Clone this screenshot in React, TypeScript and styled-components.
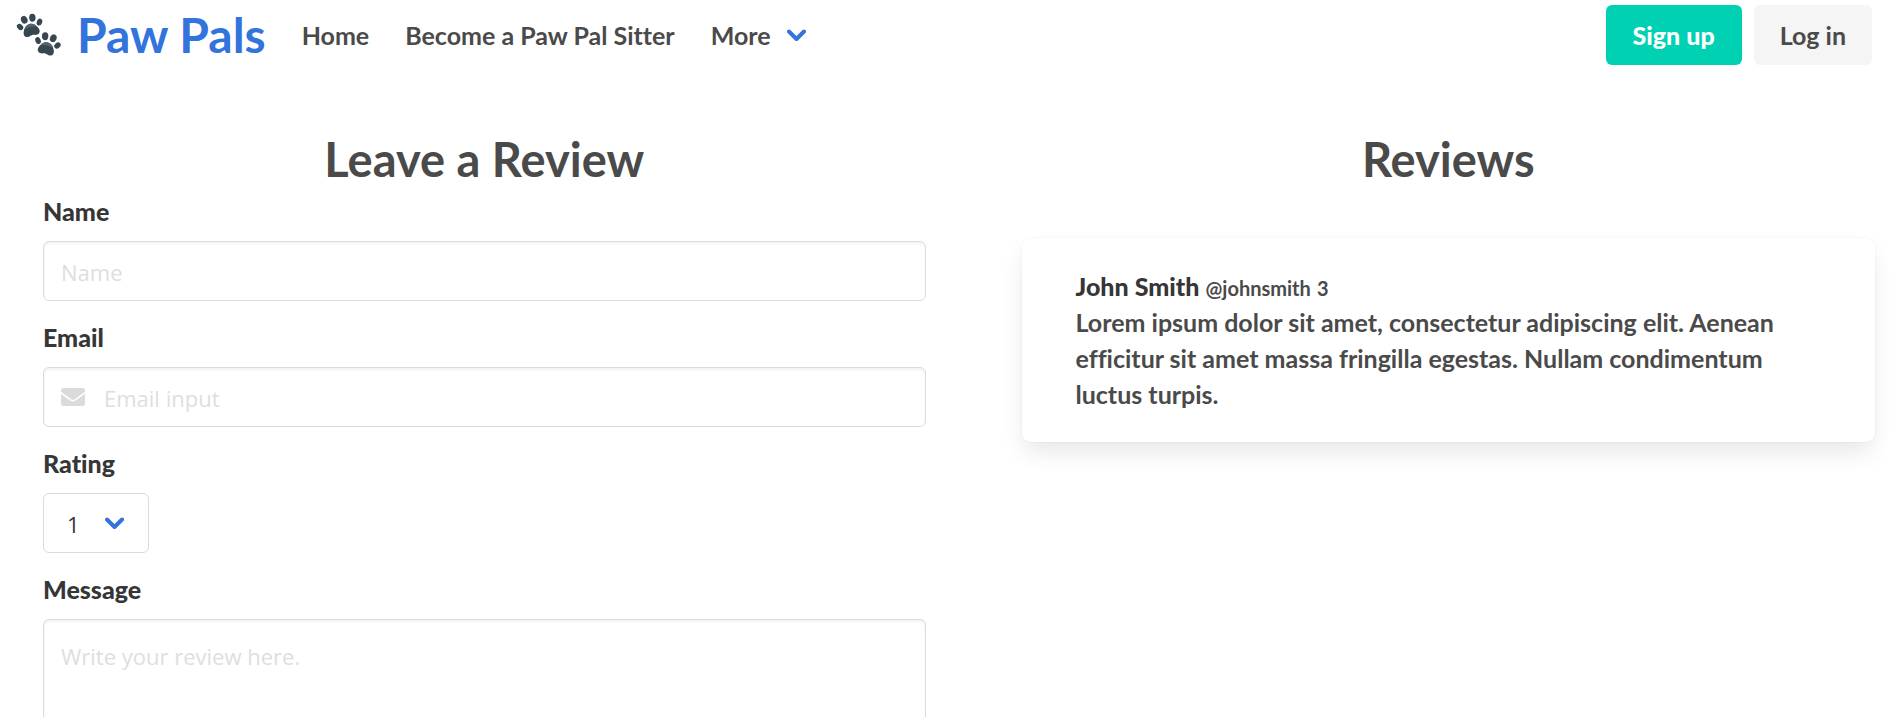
import React from "react";
import styled, { createGlobalStyle } from "styled-components";
import { FaEnvelope } from "react-icons/fa";

const GlobalStyle = createGlobalStyle`
  *, *::before, *::after { box-sizing: border-box; }
  html { overflow: hidden auto; scrollbar-width: none; }
  body {
    margin: 0;
    background: #fff;
    color: #4a4a4a;
    font-family: Lato, "Open Sans", sans-serif;
    font-size: 25px;
    font-weight: 700;
    font-variant-ligatures: none;
    line-height: 36px;
  }
  h2, p { margin: 0; }
  button, input, select, textarea { font: inherit; margin: 0; }
`;

const Navbar = styled.nav`
  display: flex;
  align-items: center;
  justify-content: space-between;
  height: 70px;
  padding: 0 17px 0 16px;
`;

const NavGroup = styled.div`
  display: flex;
  align-items: center;
  gap: 36px;
`;

const Brand = styled.a`
  display: flex;
  align-items: center;
  gap: 15px;
  color: #3273dc;
  font-size: 48px;
  line-height: 54px;
  text-decoration: none;
`;

const NavLink = styled.a`
  display: flex;
  align-items: center;
  gap: 16px;
  color: #4a4a4a;
  text-decoration: none;
`;

const Buttons = styled.div`
  display: flex;
  gap: 12px;
`;

const Button = styled.button<{ $primary?: boolean }>`
  height: 60px;
  padding: 0 ${(p) => (p.$primary ? "27px" : "26px")};
  border: 0;
  border-radius: 6px;
  background: ${(p) => (p.$primary ? "#00d1b2" : "#f5f5f5")};
  color: ${(p) => (p.$primary ? "#fff" : "#4a4a4a")};
  font-weight: ${(p) => (p.$primary ? 900 : 700)};
  cursor: pointer;
`;

const Columns = styled.main`
  display: grid;
  grid-template-columns: 1fr 1fr;
  padding-top: 62px;
`;

const FormColumn = styled.section`
  padding: 0 19px 36px 43px;
`;

const ReviewsColumn = styled.section`
  padding: 0 14px 36px 77px;
`;

const Title = styled.h2`
  font-size: 47px;
  font-weight: 700;
  line-height: 54px;
  text-align: center;
`;

const Form = styled.form`
  display: flex;
  flex-direction: column;
  gap: 18px;
  padding-top: 7px;
`;

const Field = styled.div`
  display: flex;
  flex-direction: column;
  align-items: flex-start;
  gap: 12px;
`;

const Label = styled.label`
  color: #363636;
  font-weight: 900;
`;

const Control = styled.div<{ $fit?: boolean }>`
  position: relative;
  display: flex;
  width: ${(p) => (p.$fit ? "auto" : "100%")};
`;

const TextInput = styled.input<{ $icon?: boolean }>`
  width: 100%;
  height: 60px;
  padding: 1px 17px 0 ${(p) => (p.$icon ? "60px" : "17px")};
  border: 1px solid #dbdbdb;
  border-radius: 6px;
  box-shadow: inset 0 2px 3px rgba(10, 10, 10, 0.05);
  background: #fff;
  color: #363636;
  font-family: "Open Sans", sans-serif;
  font-size: 22px;
  font-weight: 400;
  outline: none;
  &::placeholder { color: #dedede; opacity: 1; }
`;

const TextArea = styled(TextInput).attrs({ as: "textarea" })`
  display: block;
  height: auto;
  min-height: 192px;
  padding-top: 18px;
  resize: vertical;
`;

const InputIcon = styled.span`
  position: absolute;
  top: 0;
  left: 18px;
  display: flex;
  align-items: center;
  height: 60px;
  color: #dbdbdb;
  pointer-events: none;
`;

const Select = styled.select`
  appearance: none;
  width: 106px;
  height: 60px;
  padding: 2px 60px 0 23px;
  border: 1px solid #dbdbdb;
  border-radius: 6px;
  background: #fff;
  color: #363636;
  font-family: "Open Sans", sans-serif;
  font-size: 22px;
  font-weight: 400;
`;

const SelectArrow = styled.span`
  position: absolute;
  top: 0;
  right: 25px;
  display: flex;
  align-items: center;
  height: 60px;
  pointer-events: none;
`;

const ReviewCard = styled.article`
  margin-top: 52px;
  padding: 30px 54px;
  border-radius: 9px;
  background: #fff;
  box-shadow: 0 12px 24px -3px rgba(10, 10, 10, 0.1), 0 0 0 1px rgba(10, 10, 10, 0.02);
`;

const Reviewer = styled.strong`
  color: #363636;
  font-weight: 900;
`;

const Handle = styled.small`
  font-size: 20px;
  line-height: 20px;
`;

function Chevron() {
  return (
    <svg width="19" height="14" viewBox="0 0 19 14" fill="none" aria-hidden="true">
      <path d="M2 3.5 9.500 11 17 3.5" stroke="#3273dc" strokeWidth="4" strokeLinecap="round" strokeLinejoin="round" />
    </svg>
  );
}

function Paw({ transform }: { transform: string }) {
  return (
    <g transform={transform}>
      <ellipse cx="-10" cy="-1" rx="2.700" ry="3.500" transform="rotate(-35 -10 -1)" />
      <ellipse cx="-4.200" cy="-7" rx="3.200" ry="4" transform="rotate(-12 -4.200 -7)" />
      <ellipse cx="4.200" cy="-7" rx="3.200" ry="4" transform="rotate(12 4.200 -7)" />
      <ellipse cx="10" cy="-1" rx="2.700" ry="3.500" transform="rotate(35 10 -1)" />
      <path d="M0-1.500c4 0 6.200 3 7.600 6 1.200 2.700.4 5.700-2.500 6.100C2.900 10.900 2 9.800 0 9.800s-2.900 1.100-5.100.8c-2.900-.4-3.700-3.400-2.500-6.100C-6.200 1.500-4-1.500 0-1.500Z" />
      <path d="M-6.300 3C-5-.1-3-1.500 0-1.500S5-.1 6.300 3C3 .8-3 .8-6.300 3Z" fill="#56646c" />
    </g>
  );
}

function PawPrints() {
  return (
    <svg width="46" height="44" viewBox="0 0 46 44" fill="#37474f" aria-hidden="true">
      <Paw transform="translate(14 12.500) rotate(-14)" />
      <Paw transform="translate(31.500 31) rotate(14)" />
    </svg>
  );
}

export default function App() {
  return (
    <>
      <GlobalStyle />
      <Navbar aria-label="Main">
        <NavGroup>
          <Brand href="#"><PawPrints />Paw Pals</Brand>
          <NavLink href="#">Home</NavLink>
          <NavLink href="#">Become a Paw Pal Sitter</NavLink>
          <NavLink href="#">More<Chevron /></NavLink>
        </NavGroup>
        <Buttons>
          <Button type="button" $primary>Sign up</Button>
          <Button type="button">Log in</Button>
        </Buttons>
      </Navbar>
      <Columns>
        <FormColumn>
          <Title>Leave a Review</Title>
          <Form>
            <Field>
              <Label htmlFor="name">Name</Label>
              <Control><TextInput id="name" type="text" placeholder="Name" /></Control>
            </Field>
            <Field>
              <Label htmlFor="email">Email</Label>
              <Control>
                <TextInput id="email" type="email" placeholder="Email input" $icon />
                <InputIcon><FaEnvelope size={24} /></InputIcon>
              </Control>
            </Field>
            <Field>
              <Label htmlFor="rating">Rating</Label>
              <Control $fit>
                <Select id="rating" defaultValue="1">
                  {[1, 2, 3, 4, 5].map((n) => <option key={n}>{n}</option>)}
                </Select>
                <SelectArrow><Chevron /></SelectArrow>
              </Control>
            </Field>
            <Field>
              <Label htmlFor="message">Message</Label>
              <Control><TextArea id="message" placeholder="Write your review here." /></Control>
            </Field>
          </Form>
        </FormColumn>
        <ReviewsColumn>
          <Title>Reviews</Title>
          <ReviewCard>
            <p><Reviewer>John Smith</Reviewer> <Handle>@johnsmith</Handle> <Handle>3</Handle></p>
            <p>
              Lorem ipsum dolor sit amet, consectetur adipiscing elit. Aenean efficitur sit amet
              massa fringilla egestas. Nullam condimentum luctus turpis.
            </p>
          </ReviewCard>
        </ReviewsColumn>
      </Columns>
    </>
  );
}
